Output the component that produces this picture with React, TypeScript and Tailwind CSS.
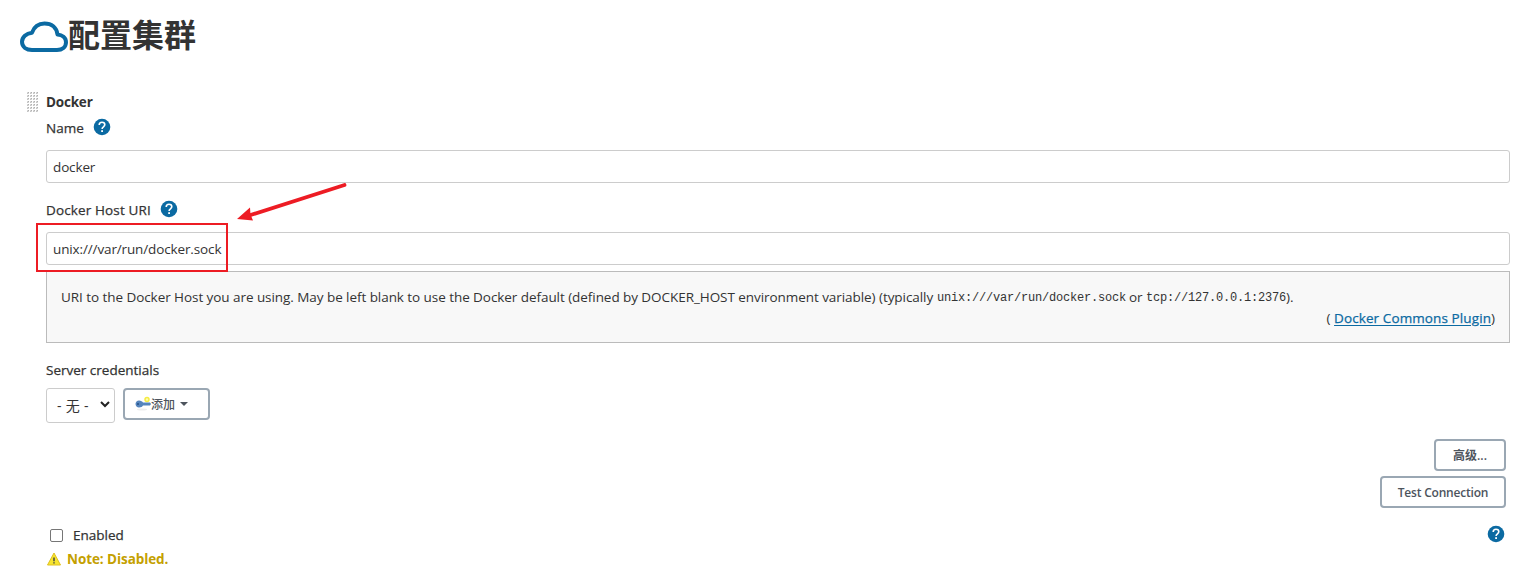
import type { ReactNode } from "react";

function HelpIcon() {
  return (
    <svg width="18" height="18" viewBox="0 0 18 18" className="mb-0.5 block shrink-0" aria-label="Help">
      <circle cx="9" cy="9" r="8.3" fill="#0b6aa2" />
      <path d="M6.200 7.100C6.200 5.400 7.400 4.300 9 4.300s2.800 1 2.800 2.500c0 1.900-2.700 2.100-2.700 4.100" fill="none" stroke="#fff" strokeWidth="1.600" />
      <rect x="8.200" y="12.200" width="1.800" height="1.800" fill="#fff" />
    </svg>
  );
}

function DragHandle() {
  return (
    <svg width="12" height="20" viewBox="0 0 12 20" className="block shrink-0">
      <defs>
        <pattern id="dots" width="3" height="3" patternUnits="userSpaceOnUse">
          <rect width="2" height="2" fill="#d8d8d8" />
          <rect x="1" width="1" height="1" fill="#b0b0b0" />
          <rect y="1" width="1" height="1" fill="#c4c4c4" />
        </pattern>
      </defs>
      <rect width="12" height="20" fill="url(#dots)" />
    </svg>
  );
}

function Label({ children }: { children: ReactNode }) {
  return <span className="whitespace-nowrap [-webkit-text-stroke:0.25px_currentColor]">{children}</span>;
}

function Field({ children }: { children: ReactNode }) {
  return (
    <div className="flex h-[33px] items-center rounded-[3px] border border-[#ccc] bg-white px-1.5 tracking-[-0.13px]">
      {children}
    </div>
  );
}

export default function App() {
  return (
    <div className="relative h-[570px] w-[1524px] overflow-hidden bg-white font-['Open_Sans','Noto_Sans_CJK_SC',sans-serif] text-[13.5px] leading-5 text-[#333]">
      <header className="flex h-[92px] items-start pl-5 pt-[11px]">
        <svg width="48" height="32" viewBox="0 0 48 32" className="mt-[10px] block">
          <path
            d="M37.500 13.500C36.600 6.500 31.500 2.500 24.500 2.500c-6.300 0-10.500 3.500-12.500 9.200C6.200 12.300 2 16 2 20.800 2 26 6.500 29 12 29h25c5.200 0 9-3 9-7.700s-3.800-7.400-8.500-7.800z"
            fill="none" stroke="#0b6aa2" strokeWidth="4" strokeLinejoin="round"
          />
        </svg>
        <h1 className="text-[32px] font-bold leading-[48px]">配置集群</h1>
      </header>

      <main className="flex flex-col pr-[14px]">
        <div className="flex h-5 items-center pl-[27px]">
          <DragHandle />
          <span className="ml-[7px] font-bold tracking-[-0.2px]">Docker</span>
        </div>

        <div className="flex flex-col pl-[46px]">
          <div className="mt-1.5 flex h-5 items-center gap-[9px]">
            <div className="w-[38px]"><Label>Name</Label></div>
            <HelpIcon />
          </div>
          <div className="mt-3">
            <Field>docker</Field>
          </div>

          <div className="mt-[17px] flex h-5 items-center gap-[9px]">
            <div className="w-[105px] tracking-[0.13px]"><Label>Docker Host URI</Label></div>
            <HelpIcon />
          </div>
          <div className="mt-3">
            <Field>unix:///var/run/docker.sock</Field>
          </div>

          <div className="mt-1.5 flex h-[72px] flex-col border border-[#bbb] bg-[#f8f8f8] px-[14px] pt-[14px]">
            <div className="flex h-[21px] items-center whitespace-pre">
              <span className="w-[876px] tracking-[-0.06px]">
                URI to the Docker Host you are using. May be left blank to use the Docker default (defined by DOCKER_HOST environment variable) (typically
              </span>
              <code className="mt-0.5 w-[192px] font-['Liberation_Mono',monospace] text-[12px] tracking-[-0.2px]">unix:///var/run/docker.sock</code>
              <span className="w-[17px]">or</span>
              <code className="mt-0.5 w-[140px] font-['Liberation_Mono',monospace] text-[12px] tracking-[-0.2px]">tcp://127.0.0.1:2376</code>
              <span>).</span>
            </div>
            <div className="flex h-[21px] items-center justify-end whitespace-pre">
              <span>( </span>
              <a className="tracking-[0.1px] text-[#0b6aa2] underline underline-offset-2 [-webkit-text-stroke:0.25px_currentColor]">Docker Commons Plugin</a>
              <span>)</span>
            </div>
          </div>

          <div className="mt-[17px] h-5"><Label>Server credentials</Label></div>
          <div className="mt-2 flex items-start gap-2">
            <div className="flex h-[35px] w-[69px] items-center justify-between rounded-[3px] border border-[#ccc] pl-2.5 pr-1">
              <span className="whitespace-nowrap text-sm tracking-[0.3px]">- 无 -</span>
              <svg width="10" height="7" viewBox="0 0 10 7" className="mb-0.5">
                <path d="M1 1l4 4 4-4" fill="none" stroke="#222" strokeWidth="2" />
              </svg>
            </div>
            <button className="flex h-8 w-[87px] items-center rounded-[4px] border-2 border-[#9aa7b3] bg-white pl-2.5 text-xs text-[#4d545d]">
              <svg width="16" height="16" viewBox="0 0 16 16" className="block">
                <ellipse cx="7" cy="13.500" rx="5" ry="1" fill="#eee" />
                <circle cx="12" cy="3.500" r="2" fill="#fffbb0" stroke="#f5ec42" strokeWidth="1.500" />
                <path d="M4 4.500c2 0 3.500 1 4 2h7l1 1.500-1 1.500H8c-.5 1-2 2-4 2S.5 9.800.5 8 2 4.500 4 4.500z" fill="#5585bd" />
                <circle cx="3" cy="8" r="1" fill="#234e84" />
              </svg>
              <span className="mt-0.5 font-medium">添加</span>
              <svg width="8" height="4" viewBox="0 0 8 4" className="ml-[5px]">
                <path d="M0 0h8L4 4z" fill="#4d545d" />
              </svg>
            </button>
          </div>

          <div className="mt-4 flex flex-col items-end gap-[5px] pr-1 text-xs font-semibold text-[#4d545d]">
            <button className="h-8 w-[72px] rounded-[4px] border-2 border-[#9aa7b3] pt-0.5">高级...</button>
            <button className="h-8 w-[126px] whitespace-nowrap rounded-[4px] border-2 border-[#9aa7b3] pt-0.5 tracking-[-0.2px]">Test Connection</button>
          </div>

          <div className="mt-[17px] flex h-5 items-center pr-[5px]">
            <span className="ml-1 size-[13px] rounded-[2px] border border-[#767676]" />
            <div className="ml-2.5 flex-1"><Label>Enabled</Label></div>
            <HelpIcon />
          </div>
          <div className="mt-1 flex h-5 items-center gap-[5px] font-bold text-[#c4a000]">
            <svg width="16" height="16" viewBox="0 0 16 16" className="block">
              <path d="M8 2l6.500 12h-13z" fill="#f7e52e" stroke="#dfc021" strokeLinejoin="round" />
              <path d="M8 6.500v3.700M8 11.200v1.300" stroke="#444" strokeWidth="1.500" />
            </svg>
            <span className="tracking-[-0.08px]">Note: Disabled.</span>
          </div>
        </div>
      </main>

      <div className="absolute left-9 top-[223px] h-[49px] w-[192px] border-2 border-[#ed1c24]" />
      <svg width="112" height="42" viewBox="0 0 112 42" className="absolute left-[237px] top-[182px]">
        <path d="M107.500 3L12 33.500" stroke="#ed1c24" strokeWidth="3.800" strokeLinecap="round" />
        <path d="M0 37l13-11.500.5 7L16 38.500z" fill="#ed1c24" />
      </svg>
    </div>
  );
}
